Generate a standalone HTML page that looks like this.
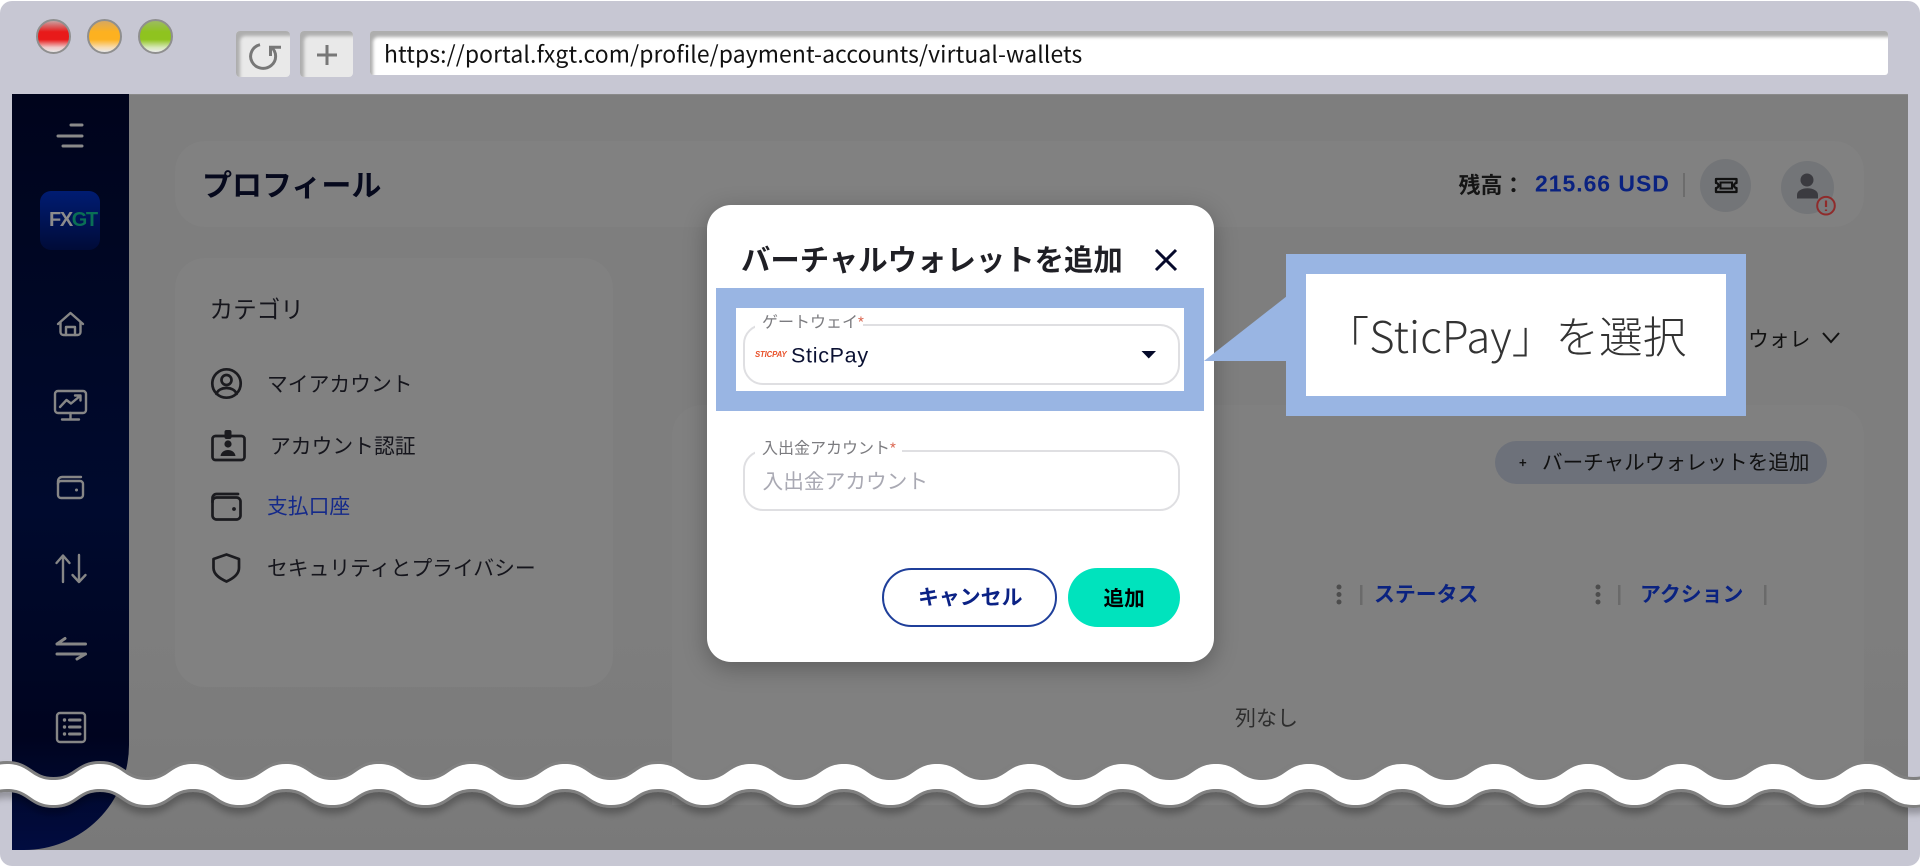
<!DOCTYPE html>
<html lang="ja"><head><meta charset="utf-8"><title>FXGT</title>
<style>
html,body{margin:0;padding:0;background:#fff;width:1920px;height:867px;overflow:hidden}
body{position:relative;font-family:"Noto Sans CJK JP","Liberation Sans",sans-serif}
.a{position:absolute;box-sizing:border-box}
.t{position:absolute;white-space:nowrap;line-height:1;transform:translateY(-50%)}
.b{font-weight:700}
svg{position:absolute;left:0;top:0}
.light{width:35px;height:35px;border-radius:50%;border:2px solid #8f8f8f;top:19px}
.tb{top:31px;height:46px;background:#e9e9e9;border-radius:4px;box-shadow:inset 5px 6px 3px -1px #aeaeae}
.field{border:2px solid #dfdfe2;border-radius:20px;background:#fff}
.gap{background:#fff;height:6px}
.leg{color:#7b7b7f;font-size:16px}
.leg i{color:#d9604a;font-style:normal;font-size:15px;font-family:"Liberation Sans",sans-serif;vertical-align:1px}
</style></head>
<body>
<div class="a" style="left:0;top:1px;width:1920px;height:865px;background:#c7c7d3;border-radius:12px"></div>

<div class="a light" style="left:36px;background:linear-gradient(#c9a0a0 0,#e81a1a 35%,#e81a1a 60%,#f0c8c8 85%,#e8e8e8 100%)"></div>
<div class="a light" style="left:87px;background:linear-gradient(#d8a860 0,#fdb120 35%,#fdb120 60%,#f8dcb0 85%,#e8e8e8 100%)"></div>
<div class="a light" style="left:138px;background:linear-gradient(#9cbc60 0,#8fc31f 35%,#8fc31f 60%,#d6e8b8 85%,#ececec 100%)"></div>

<div class="a tb" style="left:236px;width:54px"></div>
<div class="a tb" style="left:300px;width:53px"></div>
<div class="a" style="left:370px;top:31px;width:1518px;height:44px;background:#fff;border-radius:3px;box-shadow:inset 5px 8px 3px -2px #aeaeae"></div>
<div class="t" style="left:384px;top:53px;font-size:22.9px;color:#111;font-family:'Noto Sans CJK JP','Liberation Sans',sans-serif;letter-spacing:.12px">https://portal.fxgt.com/profile/payment-accounts/virtual-wallets</div>

<div class="a" style="left:12px;top:94px;width:1896px;height:756px;background:linear-gradient(#7e7e7e,#7e7e7e 70%,#797979);border-top:1px solid #8a8a8a"></div>

<div class="a" style="left:175px;top:141px;width:1689px;height:86px;background:#818181;border-radius:30px"></div>
<div class="a" style="left:175px;top:258px;width:438px;height:429px;background:#818181;border-radius:30px"></div>
<div class="a" style="left:672px;top:405px;width:1192px;height:400px;background:#808080;border-radius:30px 30px 0 0"></div>

<div class="a" style="left:12px;top:94px;width:117px;height:756px;background:linear-gradient(#00041c,#000a2e 55%,#00041f 85%,#010c40 100%);border-bottom-right-radius:105px"></div>
<div class="a" style="left:40px;top:191px;width:60px;height:59px;border-radius:11px;background:linear-gradient(#001c72,#000b38)"></div>
<div class="t b" style="left:49px;top:220px;font-size:20px;font-family:'Liberation Sans',sans-serif;letter-spacing:-1.4px;color:#8c8c8c">FX<span style="color:#0a6f55">GT</span></div>

<div class="t b" style="left:202px;top:183px;font-size:30px;color:#06091d">プロフィール</div>
<div class="t" style="left:209.5px;top:309px;font-size:23.6px;color:#15151c">カテゴリ</div>
<div class="t" style="left:267px;top:383px;font-size:20.8px;color:#15151c">マイアカウント</div>
<div class="t" style="left:270px;top:444.5px;font-size:20.8px;color:#15151c">アカウント認証</div>
<div class="t" style="left:267px;top:505px;font-size:20.8px;color:#14298a">支払口座</div>
<div class="t" style="left:267px;top:566.5px;font-size:20.8px;color:#15151c">セキュリティとプライバシー</div>

<div class="t b" style="left:1458.5px;top:184px;font-size:22px;color:#151515">残高：</div>
<div class="t b" style="left:1535px;top:184px;font-size:23px;color:#0a2280;font-family:'Liberation Sans',sans-serif;letter-spacing:.95px">215.66 USD</div>
<div class="a" style="left:1700px;top:159px;width:51px;height:53px;border-radius:50%;background:#737578"></div>
<div class="a" style="left:1781px;top:161px;width:53px;height:53px;border-radius:50%;background:#737578"></div>

<div class="t" style="left:1748px;top:338px;font-size:20.8px;color:#111">ウォレ</div>
<div class="a" style="left:1495px;top:441px;width:332px;height:43px;border-radius:22px;background:#6d717a"></div>
<div class="t b" style="left:1519px;top:462px;font-size:13px;color:#111">+</div>
<div class="t" style="left:1542px;top:460.5px;font-size:20.6px;color:#101010">バーチャルウォレットを追加</div>
<div class="t b" style="left:1374px;top:593.5px;font-size:20.9px;color:#0a2280">ステータス</div>
<div class="t b" style="left:1640px;top:593.5px;font-size:20.9px;color:#0a2280">アクション</div>
<div class="t" style="left:1235px;top:718px;font-size:21px;color:#2e2e2e">列なし</div>

<svg width="1920" height="867" viewBox="0 0 1920 867" fill="none">
  <!-- browser buttons -->
  <g stroke="#777" stroke-width="3" stroke-linejoin="miter">
    <path d="M260 44.700A12.500 12 0 1 0 271 47"/>
    <path d="M270.500 56V47.300H281"/>
    <path d="M327 45V65M317 55H337"/>
  </g>
  <!-- sidebar -->
  <g stroke="#8a8a8a" stroke-width="3" stroke-linecap="round">
    <path d="M71 125H82M58 136H82M63 146H82"/>
  </g>
  <g stroke="#868686" stroke-width="2.400" stroke-linecap="round" stroke-linejoin="round">
    <path d="M58 324L70.500 313L83 324"/>
    <path d="M60.500 322V332a3 3 0 0 0 3 3H77.500a3 3 0 0 0 3-3V322"/>
    <path d="M66 335V327h9V335"/>
    <rect x="55" y="391" width="31" height="22" rx="3"/>
    <path d="M60 407L66.500 400L71 403.500L80 396M75 395.500h5.500v5M70.500 413v6M62 419.500h17"/>
    <path d="M58 484V481a4 4 0 0 1 4-4H81"/>
    <rect x="58" y="481" width="25" height="17" rx="3"/>
    <path d="M63 582V556M56.500 563L63 555.500L69.500 563M79 555V582M72.500 575L79 582L85.500 575"/>
    <path d="M57 644H85.500M57 644L65 638.500M57 654H85.500M85.500 654L77 659" stroke-width="3"/>
    <rect x="57" y="713" width="28" height="29" rx="3"/>
    <path d="M69.500 720H80M69.500 727H80M69.500 734H80" stroke-width="3"/>
  </g>
  <g fill="#868686"><circle cx="64.500" cy="720" r="1.700"/><circle cx="64.500" cy="727" r="1.700"/><circle cx="64.500" cy="734" r="1.700"/><circle cx="76.500" cy="490" r="1.500"/></g>
  <!-- category icons -->
  <g stroke="#1b1b1f" stroke-width="2.700" stroke-linecap="round" stroke-linejoin="round">
    <circle cx="226.500" cy="383.500" r="14.200"/>
    <circle cx="226.500" cy="380" r="5"/>
    <path d="M216.500 394c2-8 18-8 20 0"/>
    <rect x="212.500" y="436" width="32" height="24" rx="3"/>
    <path d="M212.500 502V498a4 4 0 0 1 4-4H238"/>
    <rect x="212.500" y="497.500" width="28" height="22" rx="4"/>
    <path d="M226.500 554.500L239 559V568C239 575 232 579 226.500 581.500C221 579 213.500 575 213.500 568V559Z"/>
  </g>
  <rect x="224.500" y="430" width="7" height="9" rx="2" fill="#1b1b1f"/>
  <circle cx="228" cy="444" r="3.600" fill="#1b1b1f"/>
  <path d="M220.500 456c1-8 14-8 15 0z" fill="#1b1b1f"/>
  <circle cx="234" cy="509" r="1.900" fill="#1b1b1f"/>
  <!-- top right -->
  <rect x="1683" y="173" width="2" height="24" fill="#6c6c6c"/>
  <path d="M1716 179H1736.500V183a2.500 2.500 0 0 0 0 5V192H1716V188a2.500 2.500 0 0 0 0-5Z" stroke="#111" stroke-width="2.300" stroke-linejoin="round"/>
  <rect x="1720.500" y="182.500" width="11.500" height="6" stroke="#111" stroke-width="2"/>
  <ellipse cx="1807" cy="180" rx="6.500" ry="6.500" fill="#3b3b40"/>
  <path d="M1797 198.500V195c0-9 21-9 21 0v3.500z" fill="#3b3b40"/>
  <circle cx="1826" cy="205.700" r="8.800" fill="#7a7a7c" stroke="#8f2b2b" stroke-width="2"/>
  <path d="M1826 200.500V207M1826 209.500v1.500" stroke="#8f2b2b" stroke-width="2.200"/>
  <path d="M1823 333L1831 342L1839 333" stroke="#111" stroke-width="2"/>
  <!-- table header -->
  <g fill="#4d4d4d"><circle cx="1339" cy="587" r="2.500"/><circle cx="1339" cy="594.500" r="2.500"/><circle cx="1339" cy="602" r="2.500"/><circle cx="1598" cy="587" r="2.500"/><circle cx="1598" cy="594.500" r="2.500"/><circle cx="1598" cy="602" r="2.500"/></g>
  <g fill="#6a6a6a"><rect x="1360" y="585" width="2.500" height="20"/><rect x="1618" y="585" width="2.500" height="20"/><rect x="1764" y="585" width="2.500" height="20"/></g>
</svg>

<!-- modal -->
<div class="a" style="left:707px;top:205px;width:507px;height:457px;background:#fff;border-radius:24px;box-shadow:0 6px 24px rgba(0,0,0,.28)"></div>
<div class="t b" style="left:741px;top:259px;font-size:29.4px;color:#1f1f25">バーチャルウォレットを追加</div>
<svg width="1920" height="867" viewBox="0 0 1920 867" fill="none"><path d="M1156 250L1176 270M1176 250L1156 270" stroke="#06092b" stroke-width="3"/></svg>

<div class="a" style="left:716px;top:288px;width:488px;height:123px;background:#99b5e3"></div>
<div class="a" style="left:736px;top:308px;width:448px;height:83px;background:#fff"></div>
<div class="a field" style="left:742.500px;top:324px;width:437px;height:61px"></div>
<div class="a gap" style="left:755px;top:322px;width:108px"></div>
<div class="t leg" style="left:762px;top:320.500px">ゲートウェイ<i>*</i></div>
<div class="t b" style="left:755px;top:355px;font-size:7.800px;font-style:italic;color:#e8512a;font-family:'Liberation Sans',sans-serif;letter-spacing:-.15px">STICPAY</div>
<div class="t" style="left:791px;top:355.500px;font-size:21.500px;color:#0b1133;font-family:'Liberation Sans',sans-serif;letter-spacing:.7px">SticPay</div>
<svg width="1920" height="867" viewBox="0 0 1920 867"><path d="M1141.500 351H1156L1148.750 358.500Z" fill="#050a2a"/></svg>

<div class="a field" style="left:742.500px;top:450px;width:437px;height:61px"></div>
<div class="a gap" style="left:755px;top:448px;width:147px"></div>
<div class="t leg" style="left:762px;top:446.500px">入出金アカウント<i>*</i></div>
<div class="t" style="left:762.500px;top:479.500px;font-size:20.700px;color:#a9a9b3">入出金アカウント</div>

<div class="a" style="left:882px;top:568px;width:175px;height:59px;border:2px solid #1f3f9a;border-radius:30px;background:#fff"></div>
<div class="t b" style="left:918px;top:597px;font-size:20.900px;color:#0b2285">キャンセル</div>
<div class="a" style="left:1068px;top:568px;width:112px;height:59px;border-radius:30px;background:#00e3bd"></div>
<div class="t b" style="left:1103.500px;top:596.500px;font-size:20.600px;color:#000">追加</div>

<!-- callout -->
<svg width="1920" height="867" viewBox="0 0 1920 867"><path d="M1204 361L1287 296V361Z" fill="#99b5e3"/></svg>
<div class="a" style="left:1286px;top:254px;width:460px;height:162px;background:#99b5e3"></div>
<div class="a" style="left:1306px;top:274px;width:420px;height:122px;background:#fff"></div>
<div class="t" style="left:1325.500px;top:335px;font-size:43.700px;font-weight:300;color:#333">「SticPay」を選択</div>

<!-- wave -->
<svg width="1920" height="867" viewBox="0 0 1920 867">
<defs><filter id="s" x="-5%" y="-50%" width="110%" height="220%"><feDropShadow dx="0" dy="6" stdDeviation="3.500" flood-color="#000" flood-opacity=".26"/></filter></defs>
<path filter="url(#s)" fill="#fff" stroke="#808080" stroke-width="6" paint-order="stroke" d="M-86 764
c23.250 0 23.250 16 46.500 16s23.250-16 46.500-16c23.250 0 23.250 16 46.500 16s23.250-16 46.500-16c23.250 0 23.250 16 46.500 16s23.250-16 46.500-16c23.250 0 23.250 16 46.500 16s23.250-16 46.500-16c23.250 0 23.250 16 46.500 16s23.250-16 46.500-16c23.250 0 23.250 16 46.500 16s23.250-16 46.500-16c23.250 0 23.250 16 46.500 16s23.250-16 46.500-16c23.250 0 23.250 16 46.500 16s23.250-16 46.500-16c23.250 0 23.250 16 46.500 16s23.250-16 46.500-16c23.250 0 23.250 16 46.500 16s23.250-16 46.500-16c23.250 0 23.250 16 46.500 16s23.250-16 46.500-16c23.250 0 23.250 16 46.500 16s23.250-16 46.500-16c23.250 0 23.250 16 46.500 16s23.250-16 46.500-16c23.250 0 23.250 16 46.500 16s23.250-16 46.500-16c23.250 0 23.250 16 46.500 16s23.250-16 46.500-16c23.250 0 23.250 16 46.500 16s23.250-16 46.500-16c23.250 0 23.250 16 46.500 16s23.250-16 46.500-16c23.250 0 23.250 16 46.500 16s23.250-16 46.500-16c23.250 0 23.250 16 46.500 16s23.250-16 46.500-16c23.250 0 23.250 16 46.500 16s23.250-16 46.500-16c23.250 0 23.250 16 46.500 16s23.250-16 46.500-16c23.250 0 23.250 16 46.500 16s23.250-16 46.500-16
v25
c-23.250 0-23.250 16-46.500 16s-23.250-16-46.500-16c-23.250 0-23.250 16-46.500 16s-23.250-16-46.500-16c-23.250 0-23.250 16-46.500 16s-23.250-16-46.500-16c-23.250 0-23.250 16-46.500 16s-23.250-16-46.500-16c-23.250 0-23.250 16-46.500 16s-23.250-16-46.500-16c-23.250 0-23.250 16-46.500 16s-23.250-16-46.500-16c-23.250 0-23.250 16-46.500 16s-23.250-16-46.500-16c-23.250 0-23.250 16-46.500 16s-23.250-16-46.500-16c-23.250 0-23.250 16-46.500 16s-23.250-16-46.500-16c-23.250 0-23.250 16-46.500 16s-23.250-16-46.500-16c-23.250 0-23.250 16-46.500 16s-23.250-16-46.500-16c-23.250 0-23.250 16-46.500 16s-23.250-16-46.500-16c-23.250 0-23.250 16-46.500 16s-23.250-16-46.500-16c-23.250 0-23.250 16-46.500 16s-23.250-16-46.500-16c-23.250 0-23.250 16-46.500 16s-23.250-16-46.500-16c-23.250 0-23.250 16-46.500 16s-23.250-16-46.500-16c-23.250 0-23.250 16-46.500 16s-23.250-16-46.500-16c-23.250 0-23.250 16-46.500 16s-23.250-16-46.500-16c-23.250 0-23.250 16-46.500 16s-23.250-16-46.500-16c-23.250 0-23.250 16-46.500 16s-23.250-16-46.500-16c-23.250 0-23.250 16-46.500 16s-23.250-16-46.500-16c-23.250 0-23.250 16-46.500 16s-23.250-16-46.500-16Z"/>
</svg>
</body></html>
